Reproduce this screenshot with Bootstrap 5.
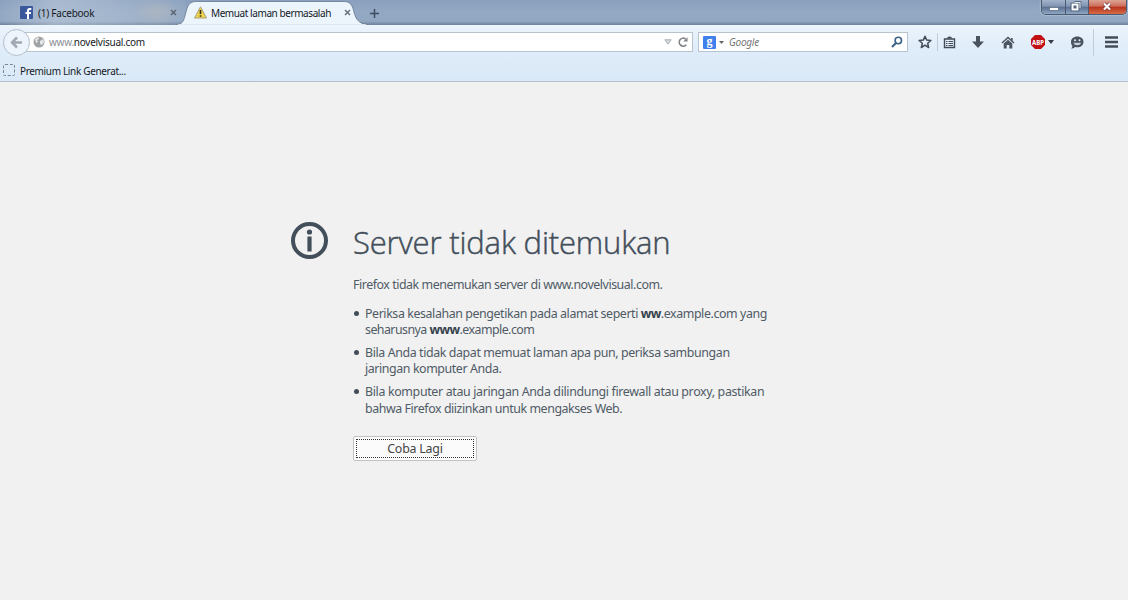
<!DOCTYPE html>
<html lang="id">
<head>
<meta charset="utf-8">
<title>Memuat laman bermasalah</title>
<link href="https://cdn.jsdelivr.net/npm/bootstrap@5.3.0/dist/css/bootstrap.min.css" rel="stylesheet">
<style>
body{width:1128px;height:600px;background:#f1f1f1;font-family:"Noto Sans","Open Sans",sans-serif;font-size:10px;line-height:1.2;color:#15191e}
svg{display:block;flex:none}
.strip{height:25px;background:linear-gradient(#899fbd,#93a8c3 45%,#92a8c2 85%,#7689a3 96%,#72849d)}
.tab-idle{width:185px;padding-left:20px;background:radial-gradient(ellipse 24px 14px at 157px 12px,#b6b9bc99,transparent),linear-gradient(90deg,#b5c5d900,#bdcbdc99 30%,#bdcbdc66 60%,#aabbd022)}
.tab-live{width:178px;padding-left:9px}
.tab-shape{left:-8px;top:0}
.tab-live>*:not(.tab-shape){position:relative}
.winctl{width:86px;height:15px;right:1px;top:0;border:1px solid #4b5b72;border-top:0;border-radius:0 0 5px 5px;overflow:hidden;box-shadow:0 0 2px #d4e2f2}
.winctl span{height:100%;background:linear-gradient(#a3b3ca,#8195b2 45%,#5b7090 50%,#8fa6c4);border-right:1px solid #4b5b72}
.winctl .shut{background:linear-gradient(#dda495,#cb6c57 45%,#b8321c 50%,#d66c47);border:0}
.toolbox{height:57px;background:linear-gradient(#ecf4fc,#dfecf9 45%,#dae9f8);border-bottom:1px solid #b5c0cc}
.navrow{height:34px}
.backbtn{width:27px;height:27px;border:1px solid #b3bfcc;border-radius:50%;background:#eef4fb;margin-left:3px;z-index:1}
.field{height:20px;background:#fff;border:1px solid #b8c3d0}
.urlbox{width:672px;margin-left:-9px;padding-left:9px}
.findbox{width:210px;margin-left:5px}
.goo{width:13px;height:13px;background:#4080ec;border-radius:1px;color:#fff;font:bold 12px/11px "Liberation Serif",serif}
.vline{width:1px;background:#c0ccd9}
.marks{height:22px;padding-left:3px}
.dashed{width:12px;height:12px;border:1px dashed #7b8794;border-radius:2px}
.ln{white-space:nowrap;letter-spacing:-.24px}
.notice{padding-left:291px;padding-top:140px;color:#505b66}
.notice-body{margin-left:25px;font-size:12.4px;line-height:16.5px}
.notice-body .ln{letter-spacing:-.41px}
.notice h1{font-size:31px;line-height:42px;font-family:"Open Sans","Noto Sans",sans-serif;font-weight:300;-webkit-text-stroke:.45px #424e5a;color:#424e5a;margin:-1px 0 0}
.notice-body h1 .ln{letter-spacing:-.16px}
.notice ul{list-style:none;padding:0;margin:0}
.notice li{position:relative;padding-left:12px;margin-bottom:6.300px}
.notice li::before{content:"";position:absolute;left:1px;top:5px;width:5px;height:5px;border-radius:50%;background:#434d57}
.notice b{color:#35414d;letter-spacing:-.6px}
.again{width:124px;height:25px;padding:2px;border:1px solid #bfc3c7;border-radius:2px;background:#fbfbfb;color:#444}
.again span{border:1px dotted #333;height:19px;width:118px;font-size:12.4px;letter-spacing:-.2px;padding-top:2px}
</style>
</head>
<body class="overflow-hidden">
<header>
<div class="strip d-flex position-relative">
  <div class="tab-idle d-flex align-items-center">
    <svg width="13" height="13"><rect width="13" height="13" rx="1" fill="#3c589c"/><path d="M9 13V8h2V6H9V5q0-1 1-1h1.300V2H9.500Q7 2 7 4.500V6H5.500v2H7v5z" fill="#fff"/></svg>
    <span class="ln" style="margin-left:5px">(1) Facebook</span>
    <svg class="ms-auto" style="margin-right:8px" width="7" height="7"><path d="M1 1l5 5M6 1L1 6" stroke="#5a6676" stroke-width="1.600"/></svg>
  </div>
  <div class="tab-live d-flex align-items-center position-relative">
    <svg class="tab-shape position-absolute" width="196" height="25"><path d="M0 25C6 24 7 20 9 12C11 4 13 1.500 20 1.500H166C173 1.500 175 4 177 12C179 20 182 23 190 25Z" fill="#ecf4fc" stroke="#66788f" stroke-width=".8"/><path d="M1 25H189" stroke="#ecf4fc" stroke-width="1.500"/></svg>
    <svg width="13" height="13"><path d="M6.500 .8L12.500 12H.5z" fill="#edd34b" stroke="#aaa080" stroke-width="1" stroke-linejoin="round"/><path d="M6.500 4v4M6.500 9.300v1.500" stroke="#33321e" stroke-width="1.600"/></svg>
    <span class="ln" style="margin-left:4px;letter-spacing:-.42px">Memuat laman bermasalah</span>
    <svg style="margin-left:13px" width="7" height="7"><path d="M1 1l5 5M6 1L1 6" stroke="#6a7480" stroke-width="1.600"/></svg>
  </div>
  <svg style="margin:9px 0 0 7px" width="9" height="9"><path d="M4.500 0v9M0 4.500h9" stroke="#3e4c60" stroke-width="1.500"/></svg>
  <div class="winctl position-absolute d-flex">
    <span style="width:24px"><svg width="23" height="14"><rect x="7.500" y="7.500" width="9" height="3" fill="#fff" stroke="#56667c" stroke-width=".7"/></svg></span>
    <span style="width:23px"><svg width="22" height="14"><path d="M8.500 2.500h5.500v5.500M6 4h6v6h-6z" fill="none" stroke="#44546b" stroke-width="2.600"/><path d="M8.500 2.500h5.500v5.500" fill="none" stroke="#dfe6ef" stroke-width="1.200"/><path d="M6.500 4.500h5v5h-5z" fill="#56677e" stroke="#fff" stroke-width="2"/></svg></span>
    <span class="shut flex-fill"><svg width="38" height="14"><path d="M15 3.500l6 6M21 3.500l-6 6" stroke="#693030" stroke-width="3.600"/><path d="M15 3.500l6 6M21 3.500l-6 6" stroke="#fff" stroke-width="2.200"/></svg></span>
  </div>
</div>
<div class="toolbox">
  <div class="navrow d-flex align-items-center">
    <div class="backbtn d-flex align-items-center justify-content-center position-relative"><svg width="13" height="13"><path d="M7 1.500L2 6.500l5 5M2.500 6.500H12" fill="none" stroke="#a0a9b3" stroke-width="2.500"/></svg></div>
    <div class="field urlbox d-flex align-items-center">
      <svg width="14" height="14" style="margin-left:1px"><circle cx="7" cy="7" r="5.500" fill="#a0a3a6"/><path d="M3 4l3-2 1 2-2 1 1 2-2 1zM8 6l3-2 1 3-2 3-2-1z" fill="#e5e6e7"/></svg>
      <span class="ln" style="margin-left:3px;letter-spacing:-.26px"><span style="color:#8b8f94">www.</span>novelvisual.com</span>
      <svg class="ms-auto" width="8" height="6"><path d="M.8.8h6.400L4 5z" fill="#d8dadc" stroke="#a8adb2"/></svg>
      <svg style="margin:0 3px 0 5px" width="12" height="12"><path d="M9.300 8.700A4 4 0 1 1 8.500 2.800" fill="none" stroke="#7c8186" stroke-width="1.600"/><path d="M6.300 5.500H10.500V1.200z" fill="#7c8186"/></svg>
    </div>
    <div class="field findbox d-flex align-items-center">
      <span class="goo text-center" style="margin-left:4px">g</span>
      <svg style="margin-left:3px" width="5" height="3"><path d="M0 0h5L2.500 3z" fill="#666"/></svg>
      <span class="ln fst-italic" style="margin-left:5px;color:#777">Google</span>
      <svg class="ms-auto" style="margin-right:4px" width="12" height="12"><circle cx="7.300" cy="4.500" r="3.200" fill="none" stroke="#3d6387" stroke-width="1.600"/><path d="M5 7L1 11" stroke="#3d6387" stroke-width="2.200"/></svg>
    </div>
    <svg style="margin-left:10px" width="14" height="14"><path d="M7 1.200l1.700 3.900 4.200.4-3.200 2.800.95 4.200L7 10.200l-3.650 2.300.95-4.200L1.100 5.500l4.200-.4z" fill="none" stroke="#424c58" stroke-width="1.500" stroke-linejoin="round"/></svg>
    <i class="vline" style="height:18px;margin-left:5px"></i>
    <svg style="margin-left:5px" width="13" height="13"><path d="M1.500 3h10v8.500h-10z" fill="none" stroke="#424c58" stroke-width="1.400"/><path d="M4 2.500q0-2 2.500-2t2.500 2z" fill="#424c58"/><path d="M3 5.500h1.500m1 0H10M3 7.500h1.500m1 0H10M3 9.500h1.500m1 0H10" stroke="#424c58" stroke-width="1"/></svg>
    <svg style="margin-left:16px" width="12" height="12"><path d="M4 0h4v5.500h4L6 12 0 5.500h4z" fill="#4a5460"/></svg>
    <svg style="margin-left:17px" width="14" height="13"><path d="M1 7L7 1.500l6 5.500" fill="none" stroke="#4a5460" stroke-width="1.500"/><path d="M2.700 7.500L7 3.700 11.300 7.500v5H8.300V9H5.700v3.500h-3zM10 2h1.700V5L10 3.500z" fill="#4a5460"/></svg>
    <svg style="margin-left:16px" width="14" height="14" viewBox="0 0 14 14"><path d="M4 0h6l4 4v6l-4 4H4l-4-4V4z" fill="#c21015"/><text x="7" y="9.500" text-anchor="middle" font-size="7" font-weight="700" fill="#fff" textLength="12" lengthAdjust="spacingAndGlyphs">ABP</text></svg>
    <svg style="margin-left:3px" width="6" height="4"><path d="M0 0h6L3 4z" fill="#333c46"/></svg>
    <svg style="margin-left:16px" width="14" height="13"><path d="M7.300.5c3.700 0 6.200 2.400 6.200 5.400s-2.700 5.400-6.200 5.400c-1 0-1.500-.1-2.300-.4-1 1-2.400 1.500-4 1.500 1-.7 1.300-1.600 1.300-2.700C1.400 8.600 1 7.300 1 5.900 1 2.900 3.600.5 7.300.5z" fill="#4a5460"/><circle cx="5" cy="4.300" r="1" fill="#e3edf8"/><circle cx="9.500" cy="4.300" r="1" fill="#e3edf8"/><path d="M3.300 6.800h8q-1 2.500-4 2.500t-4-2.500z" fill="#c6d0db"/></svg>
    <i class="vline" style="height:27px;margin-left:9px"></i>
    <svg style="margin-left:11px" width="13" height="12"><path d="M0 1.500h13M0 6h13M0 10.500h13" stroke="#434d59" stroke-width="2.300"/></svg>
  </div>
  <div class="marks d-flex align-items-center"><span class="dashed"></span><span class="ln" style="margin-left:5px;letter-spacing:-.34px;padding-top:1px">Premium Link Generat...</span></div>
</div>
</header>
<main class="notice d-flex">
  <svg width="37" height="37"><circle cx="18.500" cy="18.500" r="16.500" fill="none" stroke="#424e5a" stroke-width="4"/><circle cx="18.500" cy="10" r="2.600" fill="#424e5a"/><path d="M18.500 14.500v15" stroke="#424e5a" stroke-width="4.200"/></svg>
  <div class="notice-body">
    <h1><span class="ln">Server tidak ditemukan</span></h1>
    <p style="margin:14px 0 12px"><span class="ln" style="letter-spacing:-.45px">Firefox tidak menemukan server di www.novelvisual.com.</span></p>
    <ul>
      <li><span class="ln">Periksa kesalahan pengetikan pada alamat seperti <b>ww</b>.example.com yang</span><br><span class="ln" style="letter-spacing:-.54px">seharusnya <b>www</b>.example.com</span></li>
      <li><span class="ln" style="letter-spacing:-.39px">Bila Anda tidak dapat memuat laman apa pun, periksa sambungan</span><br><span class="ln">jaringan komputer Anda.</span></li>
      <li><span class="ln" style="letter-spacing:-.34px">Bila komputer atau jaringan Anda dilindungi firewall atau proxy, pastikan</span><br><span class="ln" style="letter-spacing:-.43px">bahwa Firefox diizinkan untuk mengakses Web.</span></li>
    </ul>
    <button class="again d-block" style="margin-top:19px"><span class="d-flex align-items-center justify-content-center">Coba Lagi</span></button>
  </div>
</main>
<script src="https://cdn.jsdelivr.net/npm/bootstrap@5.3.0/dist/js/bootstrap.bundle.min.js"></script>
</body>
</html>
